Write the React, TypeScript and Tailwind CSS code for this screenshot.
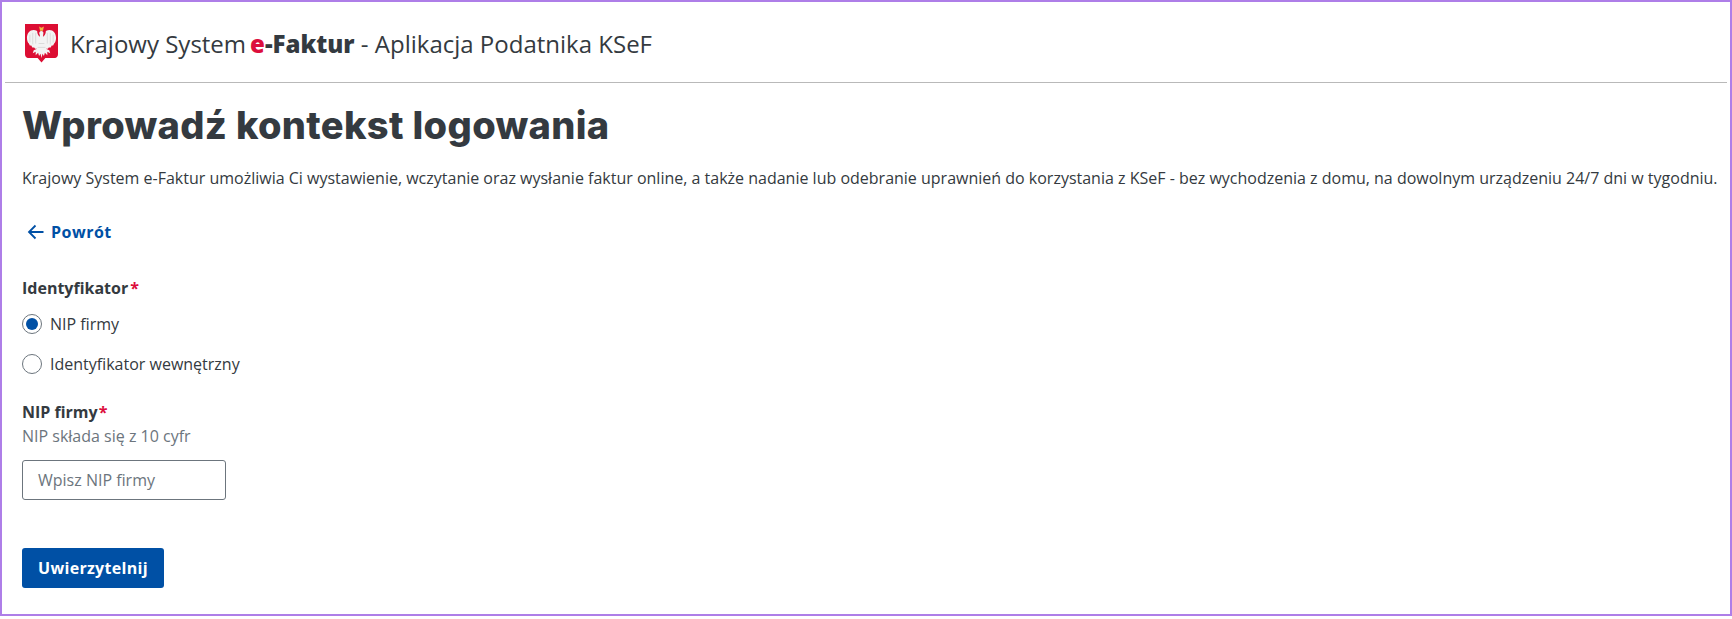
import React from "react";

function Emblem() {
  return (
    <svg width="33" height="39" viewBox="0 0 34 40" className="shrink-0">
      <path d="M0 0H34V31Q34 35 29 35H21L17 39.500L13 35H5Q0 35 0 31Z" fill="#dc0e33" />
      <path d="M17 7C15 7 14 9 15 10.500L15.500 13C14 12 12.500 10 12.500 7C7 4 2 8 2 14C2 17 3 19 4 20L5 22L6.500 22L7.500 24L9.500 24L10.500 25.500L12.500 25.500L9 27L8 30L11 28.500L11 32L13.500 29.500L14.500 33L16 30.500L17 35L18 30.500L19.500 33L20.500 29.500L23 32L23 28.500L26 30L25 27L21.500 25.500L23.500 25.500L24.500 24L26.500 24L27.500 22L29 22L30 20C31 19 32 17 32 14C32 8 27 4 21.500 7C21.500 10 20 12 18.500 13L19 9C19 8 18 7 17 7Z" fill="#f3f3f3" />
      <path d="M14.500 2.500L17 3.800L19.500 2.500L18.500 6.800H15.500Z" fill="#f0b840" />
      <path d="M5 11V19M8 9V21M11 9V20M29 11V19M26 9V21M23 9V20M14 20H20M13 24H21" stroke="#cfcfcf" strokeWidth="0.7" fill="none" />
    </svg>
  );
}

export default function App() {
  return (
    <div className="h-[616px] w-[1732px] overflow-hidden border-2 border-[#ae7ee8] bg-white text-[16px] text-[#343a40] [font-family:'Open_Sans',sans-serif]">
      <header className="mx-[3px] flex h-[81px] items-center border-b border-[#b9b9b9] pt-[3px] pl-[20px]">
        <Emblem />
        <div className="ml-[12px] whitespace-nowrap text-[24px] leading-[30px]">
          Krajowy System<span className="ml-[4px] font-extrabold"><span className="text-[#dc0e3c]">e</span>-Faktur</span> - Aplikacja Podatnika KSeF
        </div>
      </header>
      <main className="pl-[20px]">
        <h1 className="mt-[20px] text-[38px] font-extrabold leading-[44px] tracking-[0.35px] [font-family:Inter,sans-serif]">Wprowadź kontekst logowania</h1>
        <p className="mt-[19px] whitespace-nowrap leading-[24px]">
          Krajowy System e-Faktur umożliwia Ci wystawienie, wczytanie oraz wysłanie faktur online, a także nadanie lub odebranie uprawnień do korzystania z KSeF - bez wychodzenia z domu, na dowolnym urządzeniu 24/7 dni w tygodniu.
        </p>
        <a className="mt-[30px] flex h-[24px] items-center gap-[6px] pl-[5px] font-bold tracking-[0.5px] text-[#0050a5]">
          <svg width="18" height="18" viewBox="0 0 18 18" fill="none" stroke="#0050a5" strokeWidth="1.8"><path d="M16.500 9H2M8.500 2.500L2 9L8.500 15.500" /></svg>
          Powrót
        </a>
        <div className="mt-[34px] font-bold leading-[20px]">Identyfikator<span className="ml-[2px] text-[#dc0e3c]">*</span></div>
        <label className="mt-[14px] flex h-[24px] items-center gap-[8px]">
          <span className="flex h-[20px] w-[20px] items-center justify-center rounded-full border border-[#6c757d]">
            <span className="h-[12px] w-[12px] rounded-full bg-[#0050a5]" />
          </span>
          NIP firmy
        </label>
        <label className="mt-[16px] flex h-[24px] items-center gap-[8px]">
          <span className="h-[20px] w-[20px] rounded-full border border-[#6c757d]" />
          Identyfikator wewnętrzny
        </label>
        <div className="mt-[24px] font-bold leading-[24px]">NIP firmy<span className="ml-[1px] text-[#dc0e3c]">*</span></div>
        <div className="leading-[24px] text-[#6c757d]">NIP składa się z 10 cyfr</div>
        <div className="mt-[12px] flex h-[40px] w-[204px] items-center rounded-[3px] border border-[#6c757d] pl-[15px] text-[#6c757d]">Wpisz NIP firmy</div>
        <button className="mt-[48px] block h-[40px] w-[142px] rounded-[3px] bg-[#0050a5] font-bold tracking-[0.3px] text-white">Uwierzytelnij</button>
      </main>
    </div>
  );
}
